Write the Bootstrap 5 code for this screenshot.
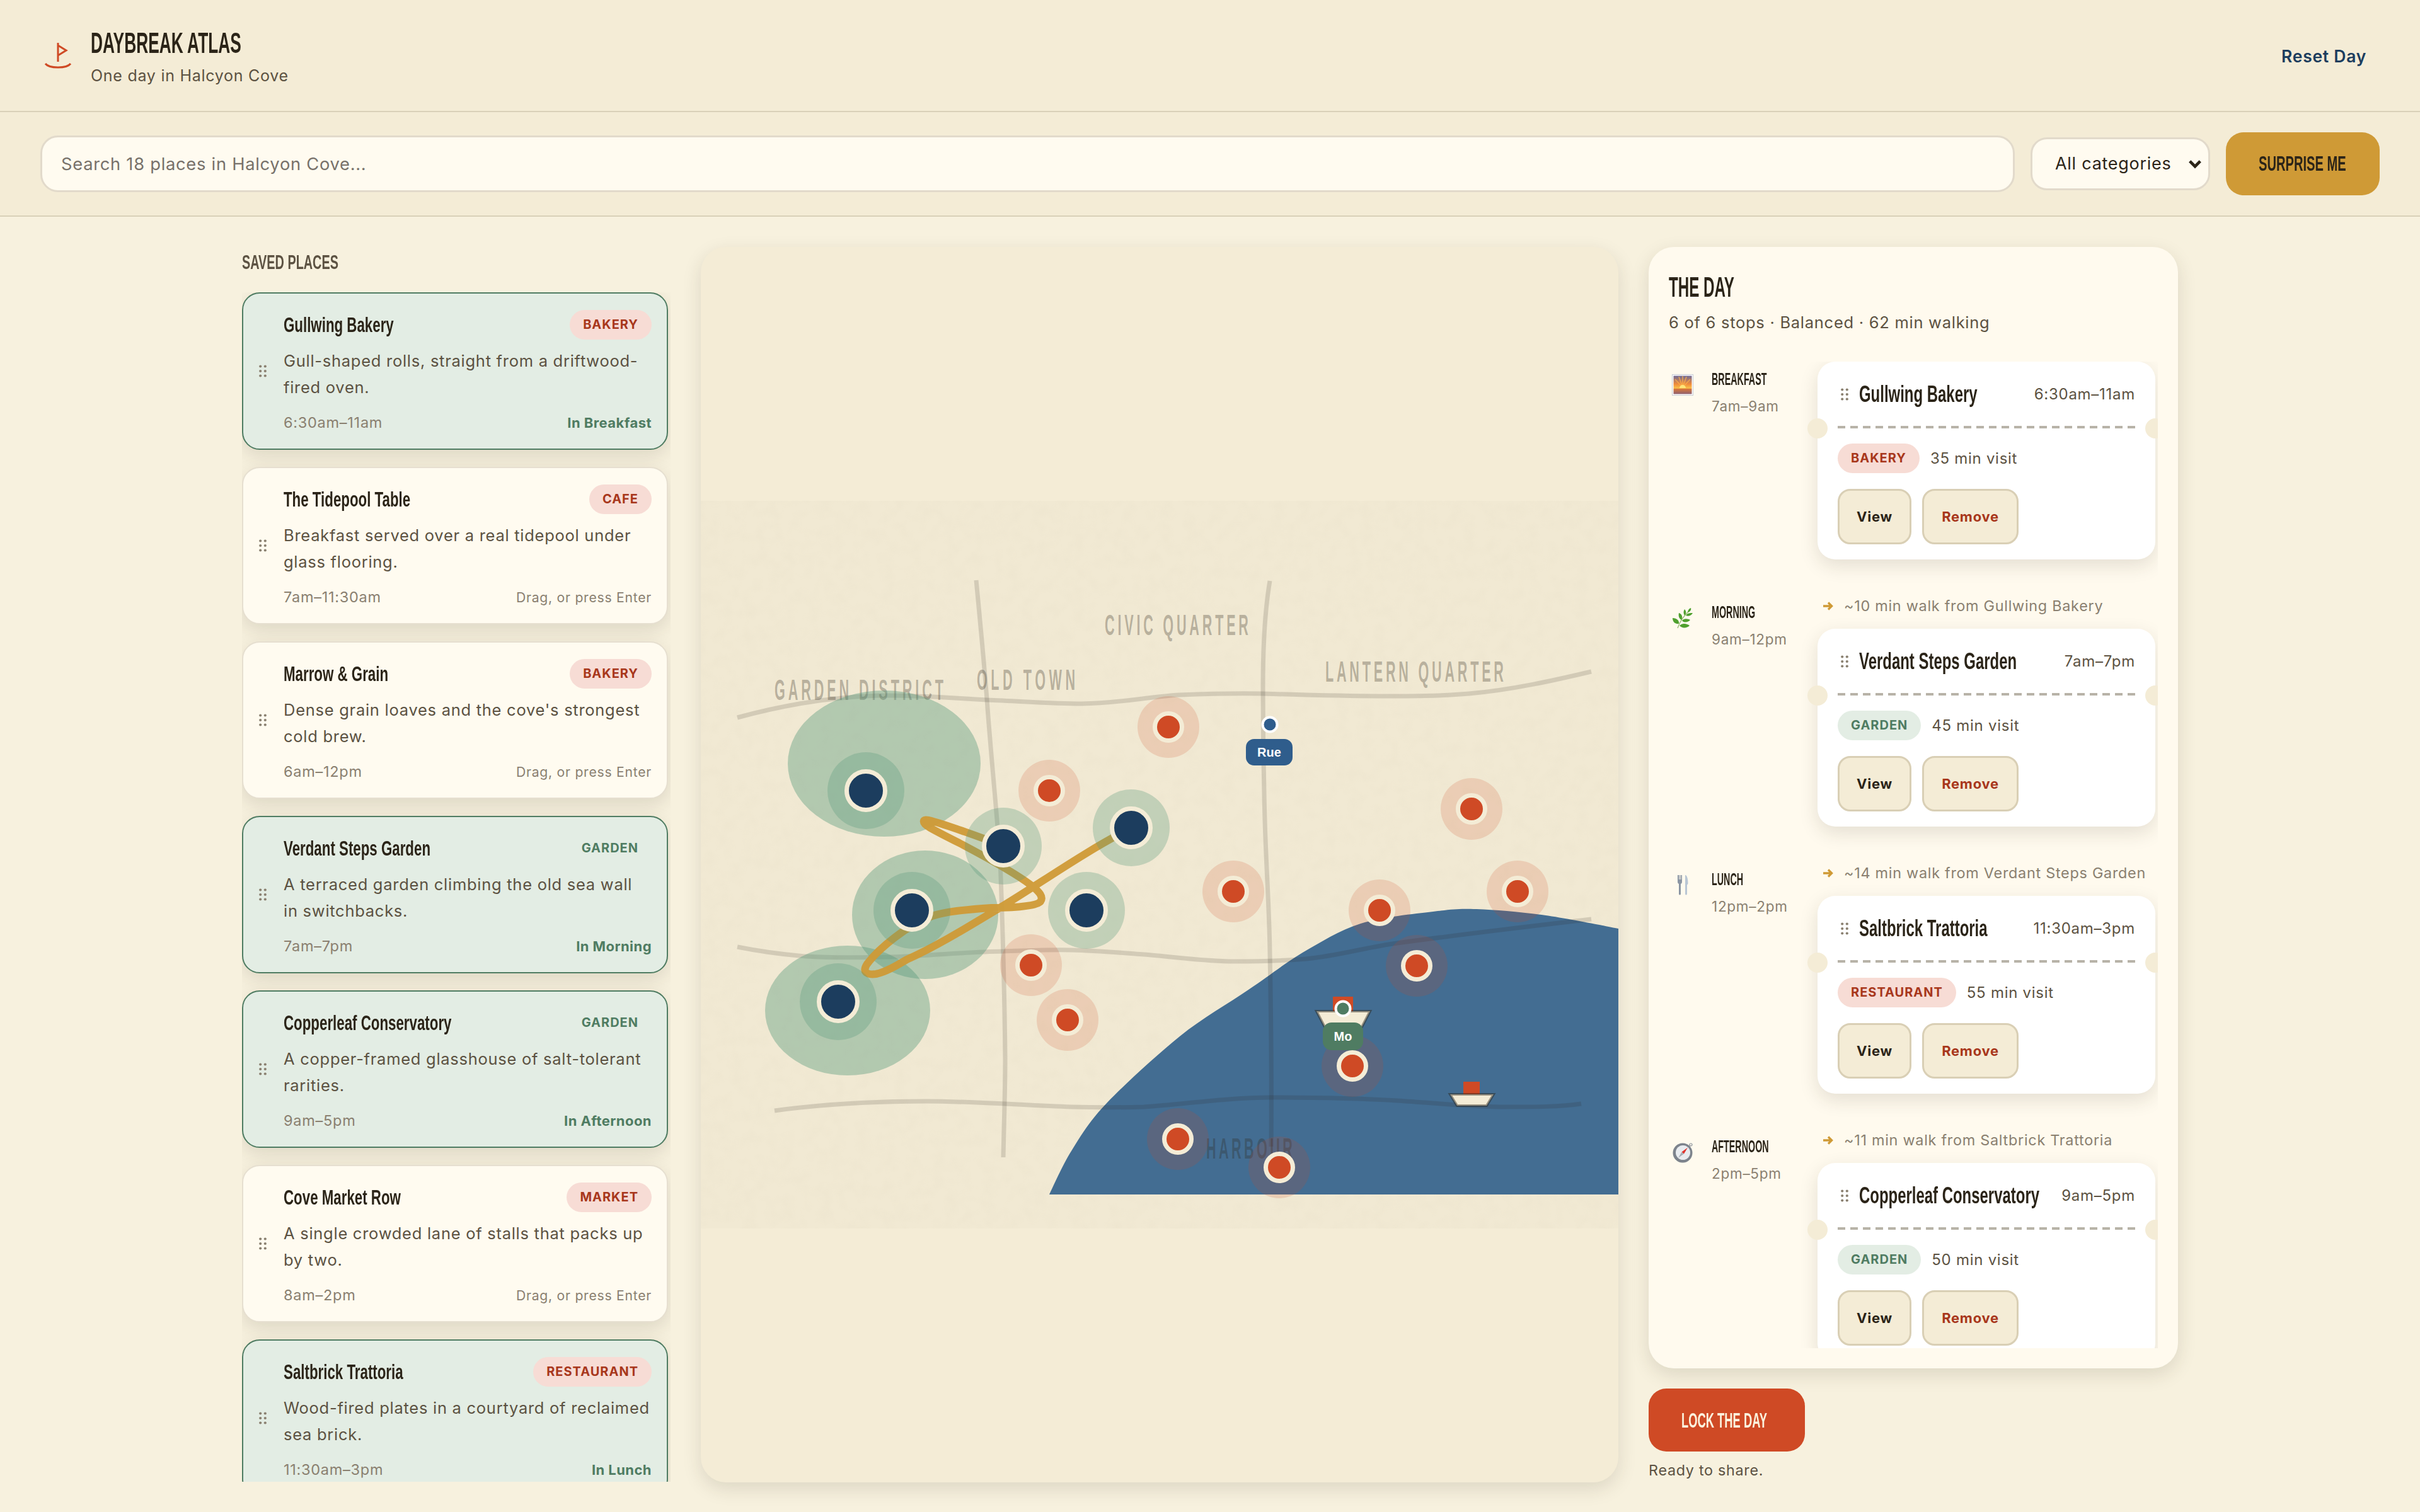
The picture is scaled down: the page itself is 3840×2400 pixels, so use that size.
<!DOCTYPE html>
<html lang="en">
<head>
    <meta charset="UTF-8">
    <meta name="viewport" content="width=device-width, initial-scale=1.0">
    <title>Daybreak Atlas</title>
    <link rel="stylesheet" href="https://cdn.jsdelivr.net/npm/bootstrap@5.3.0/dist/css/bootstrap.min.css">
    <style>
        body {
            background: #f7f1de;
            color: #2b2418;
            font-family: "Inter", "Liberation Sans", sans-serif;
            font-size: 26px;
            letter-spacing: .028em;
            height: 2400px;
            overflow: hidden;
        }
        input, select, button { letter-spacing: inherit; }
        .disp {
            display: inline-block;
            font-family: "Liberation Sans Narrow", "Liberation Sans", sans-serif;
            font-weight: 700;
            letter-spacing: 0;
            white-space: nowrap;
            transform-origin: left center;
        }
        .top-bar {
            background: #f4ecd6;
            border-bottom: 2px solid #d9d0b8;
            height: 178px;
            padding: 0 64px;
        }
        .brand-mark { width: 56px; height: 56px; margin-right: 24px; }
        .brand-name { font-size: 47px; line-height: 56px; display: block; transform: scaleX(.56); margin-top: 2px; }
        .brand-sub { font-size: 25px; line-height: 36px; color: #5c5242; margin-top: 6px; }
        .reset-link { font-size: 26.5px; font-weight: 600; color: #1c3d5e; padding: 4px 21px 0; border: 0; background: none; }
        .tool-bar {
            background: #f4ecd6;
            border-bottom: 2px solid #d9d0b8;
            height: 166px;
            padding: 0 64px;
            gap: 25px;
        }
        .search-box.form-control {
            height: 90px;
            border: 3px solid #e2dacb;
            border-radius: 28px;
            background: #fffbf0;
            font-size: 27.3px;
            padding: 0 30px;
            flex: 1;
        }
        .search-box::placeholder { color: #77716a; }
        .cat-pick.form-select {
            width: 285px;
            height: 84px;
            flex: none;
            border: 3px solid #e2dacb;
            border-radius: 26px;
            background-color: #fffbf0;
            color: #2b2418;
            font-size: 27px;
            padding: 0 0 0 36px;
            background-position: right 10px center;
            background-size: 22px 22px;
            --bs-form-select-bg-img: url("data:image/svg+xml,%3csvg xmlns='http://www.w3.org/2000/svg' viewBox='0 0 16 16'%3e%3cpath fill='none' stroke='%232b2418' stroke-width='3.4' d='M2 5l6 6 6-6'/%3e%3c/svg%3e");
        }
        .gold-btn.btn {
            width: 244px;
            height: 100px;
            border-radius: 28px;
            background: #cf9a36;
            border: 0;
            color: #2b2418;
            padding: 0 0 0 52px;
            text-align: left;
        }
        .gold-btn .disp { font-size: 33px; transform: scaleX(.61); }
        .plan-grid {
            display: grid;
            grid-template-columns: 680px 1456px 840px;
            gap: 48px;
            width: 3072px;
            margin: 0 auto;
            padding-top: 48px;
            height: 2008px;
        }
        .side-col { min-height: 0; }
        .side-head { font-size: 32px; line-height: 48px; color: #5c5242; height: 48px; margin: 0 0 24px; transform: scaleX(.62); }
        .place-list {
            height: 1888px;
            overflow: hidden;
            padding-right: 4px;
            gap: 27px;
        }
        .place-card.card {
            flex: none;
            height: 250px;
            flex-direction: row;
            align-items: center;
            background: #fffbf0;
            border: 2px solid #e6dfd0;
            border-radius: 28px;
            box-shadow: 0 10px 30px rgba(43, 36, 24, .13);
        }
        .place-card.is-picked { background: #e3ede4; border-color: #4f7c62; }
        .grip-dots { width: 12px; height: 20px; fill: #8a8070; flex: none; }
        .place-card > .grip-dots { margin: 0 27px 0 25px; }
        .place-body { flex: 1; min-width: 0; padding-right: 24px; }
        .place-name { font-size: 34px; line-height: 47px; transform: scaleX(.656); }
        .kind-tag {
            font-family: "Inter", "Liberation Sans", sans-serif;
            font-size: 20px;
            font-weight: 700;
            letter-spacing: .05em;
            line-height: 47px;
            height: 47px;
            padding: 0 21px;
            flex: none;
            background: #f7dcd5;
            color: #a8371c;
        }
        .kind-tag.is-green { background: #e3ede4; color: #4f7c62; }
        .is-picked .kind-tag.is-green { background: transparent; }
        .place-desc { font-size: 25.5px; line-height: 42px; color: #5c5242; margin: 13px 0 20px; height: 84px; }
        .place-meta { font-size: 23.5px; line-height: 30px; color: #8a8070; }
        .in-slot { font-size: 22px; font-weight: 700; color: #4f7c62; letter-spacing: .02em; }
        .drag-hint { font-size: 21.2px; color: #8a8070; }
        .map-card.card {
            background: #f4ecd6;
            border: 0;
            border-radius: 40px;
            box-shadow: 0 10px 30px rgba(43, 36, 24, .13);
            height: 1961px;
            overflow: hidden;
        }
        .map-art { width: 1456px; height: 1155px; display: block; }
        .zone-name {
            font-family: "Liberation Sans Narrow", "Liberation Sans", sans-serif;
            font-size: 46px;
            font-weight: 700;
            letter-spacing: 0;
            fill: #2b2418;
            fill-opacity: .3;
        }
        .pin-tag { font-family: "Liberation Sans", sans-serif; font-size: 20px; font-weight: 700; fill: #fff; letter-spacing: 0; }
        .day-col { height: 1960px; }
        .day-panel {
            flex: 1;
            min-height: 0;
            background: #fffaee;
            border-radius: 40px;
            padding: 38px 32px 32px;
            box-shadow: 0 10px 30px rgba(43, 36, 24, .13);
        }
        .day-title { font-size: 44px; line-height: 52px; height: 52px; margin: 0; align-self: flex-start; transform: scaleX(.55); }
        .day-sub { font-size: 25.5px; line-height: 36px; color: #5c5242; margin: 12px 0 0; height: 80px; flex: none; }
        .day-scroll { flex: 1; min-height: 0; overflow: hidden; padding-right: 4px; }
        .day-row { display: flex; flex: none; margin-bottom: 56px; }
        .slot-icon { width: 68px; flex: none; padding: 20px 0 0 5px; }
        .slot-icon svg { width: 34px; height: 34px; display: block; }
        .slot-info { width: 168px; flex: none; padding-top: 12px; }
        .slot-name { font-size: 27px; line-height: 32px; display: block; transform: scaleX(.53); }
        .slot-time { font-size: 22.5px; line-height: 30px; color: #8a8070; margin-top: 12px; }
        .slot-main { width: 536px; flex: none; }
        .walk-note { height: 36px; margin-bottom: 18px; padding-left: 8px; gap: 17px; font-size: 23.4px; color: #8a8070; white-space: nowrap; }
        .walk-note svg { width: 17px; height: 16px; flex: none; }
        .stop-card.card {
            border: 0;
            border-radius: 28px;
            background: #fff;
            padding: 24px 32px;
            height: 314px;
            box-shadow: 0 10px 30px rgba(43, 36, 24, .13);
        }
        .stop-head { height: 56px; }
        .stop-head .grip-dots { margin: 0 17px 0 5px; }
        .stop-title-wrap { flex: 1 1 0; min-width: 0; }
        .stop-name { font-size: 36px; line-height: 56px; transform: scaleX(.665); }
        .stop-hours { font-size: 24px; color: #5c5242; white-space: nowrap; flex: none; }
        .tear-line {
            height: 4px;
            margin: 22px 0 24px;
            background: repeating-linear-gradient(90deg, #b8b3a8 0 12px, transparent 12px 20px);
        }
        .tear-hole {
            position: absolute;
            width: 32px;
            height: 32px;
            top: 90px;
            border-radius: 50%;
            background: #f4ecd6;
        }
        .tear-hole.at-left { left: -16px; }
        .tear-hole.at-right { right: -16px; }
        .visit-len { font-size: 24px; color: #5c5242; margin-left: 17px; }
        .stop-btns { gap: 17px; margin-top: 25px; }
        .stop-btn.btn {
            height: 88px;
            border: 3px solid #d9cfb5;
            border-radius: 20px;
            background: #f4ecd6;
            font-size: 22px;
            font-weight: 700;
            color: #2b2418;
            padding: 0;
        }
        .stop-btn.view-btn { width: 117px; }
        .stop-btn.drop-btn { width: 153px; color: #a8371c; }
        .lock-btn.btn {
            width: 248px;
            height: 100px;
            border: 0;
            border-radius: 28px;
            background: #cf4a25;
            color: #fbf3de;
            margin-top: 32px;
            padding: 0 0 0 52px;
            text-align: left;
        }
        .lock-btn .disp { font-size: 34px; transform: scaleX(.54); }
        .ready-note { font-size: 23.3px; line-height: 36px; color: #5c5242; margin: 12px 0 0; }
    </style>
</head>
<body>
    <svg width="0" height="0" class="position-absolute">
        <defs>
            <g id="grip">
                <circle cx="2.2" cy="2.5" r="2.1"/><circle cx="9.8" cy="2.5" r="2.1"/>
                <circle cx="2.2" cy="10" r="2.1"/><circle cx="9.8" cy="10" r="2.1"/>
                <circle cx="2.2" cy="17.5" r="2.1"/><circle cx="9.8" cy="17.5" r="2.1"/>
            </g>
            <g id="walk-arrow">
                <path d="M1 8h13M9 2.5L14.5 8 9 13.5" fill="none" stroke="#cf9a36" stroke-width="3.4"/>
            </g>
        </defs>
    </svg>

    <header class="navbar top-bar">
        <div class="d-flex align-items-center">
            <svg class="brand-mark" viewBox="64 58 56 56" fill="none" stroke="#cf4a25" stroke-width="3">
                <path d="M92 66v30M92 70l13 8-13 8"/>
                <path d="M72 99c6 8 34 8 40 0"/>
            </svg>
            <div>
                <span class="disp brand-name">DAYBREAK ATLAS</span>
                <div class="brand-sub">One day in Halcyon Cove</div>
            </div>
        </div>
        <button class="reset-link" type="button">Reset Day</button>
    </header>

    <div class="tool-bar d-flex align-items-center">
        <input class="form-control search-box" type="text" placeholder="Search 18 places in Halcyon Cove...">
        <select class="form-select cat-pick"><option>All categories</option></select>
        <button class="btn gold-btn" type="button"><span class="disp">SURPRISE ME</span></button>
    </div>

    <main class="plan-grid">
        <section class="side-col">
            <h2 class="disp side-head">SAVED PLACES</h2>
            <div class="place-list d-flex flex-column">

                <article class="card place-card is-picked">
                    <svg class="grip-dots"><use href="#grip"/></svg>
                    <div class="place-body">
                        <div class="d-flex justify-content-between"><span class="disp place-name">Gullwing Bakery</span><span class="badge rounded-pill kind-tag">BAKERY</span></div>
                        <p class="place-desc">Gull-shaped rolls, straight from a driftwood-fired oven.</p>
                        <div class="d-flex justify-content-between align-items-center place-meta"><span>6:30am–11am</span><span class="in-slot">In Breakfast</span></div>
                    </div>
                </article>

                <article class="card place-card">
                    <svg class="grip-dots"><use href="#grip"/></svg>
                    <div class="place-body">
                        <div class="d-flex justify-content-between"><span class="disp place-name">The Tidepool Table</span><span class="badge rounded-pill kind-tag">CAFE</span></div>
                        <p class="place-desc">Breakfast served over a real tidepool under glass flooring.</p>
                        <div class="d-flex justify-content-between align-items-center place-meta"><span>7am–11:30am</span><span class="drag-hint">Drag, or press Enter</span></div>
                    </div>
                </article>

                <article class="card place-card">
                    <svg class="grip-dots"><use href="#grip"/></svg>
                    <div class="place-body">
                        <div class="d-flex justify-content-between"><span class="disp place-name">Marrow &amp; Grain</span><span class="badge rounded-pill kind-tag">BAKERY</span></div>
                        <p class="place-desc">Dense grain loaves and the cove's strongest cold brew.</p>
                        <div class="d-flex justify-content-between align-items-center place-meta"><span>6am–12pm</span><span class="drag-hint">Drag, or press Enter</span></div>
                    </div>
                </article>

                <article class="card place-card is-picked">
                    <svg class="grip-dots"><use href="#grip"/></svg>
                    <div class="place-body">
                        <div class="d-flex justify-content-between"><span class="disp place-name">Verdant Steps Garden</span><span class="badge rounded-pill kind-tag is-green">GARDEN</span></div>
                        <p class="place-desc">A terraced garden climbing the old sea wall<br>in switchbacks.</p>
                        <div class="d-flex justify-content-between align-items-center place-meta"><span>7am–7pm</span><span class="in-slot">In Morning</span></div>
                    </div>
                </article>

                <article class="card place-card is-picked">
                    <svg class="grip-dots"><use href="#grip"/></svg>
                    <div class="place-body">
                        <div class="d-flex justify-content-between"><span class="disp place-name">Copperleaf Conservatory</span><span class="badge rounded-pill kind-tag is-green">GARDEN</span></div>
                        <p class="place-desc">A copper-framed glasshouse of salt-tolerant rarities.</p>
                        <div class="d-flex justify-content-between align-items-center place-meta"><span>9am–5pm</span><span class="in-slot">In Afternoon</span></div>
                    </div>
                </article>

                <article class="card place-card">
                    <svg class="grip-dots"><use href="#grip"/></svg>
                    <div class="place-body">
                        <div class="d-flex justify-content-between"><span class="disp place-name">Cove Market Row</span><span class="badge rounded-pill kind-tag">MARKET</span></div>
                        <p class="place-desc">A single crowded lane of stalls that packs up by two.</p>
                        <div class="d-flex justify-content-between align-items-center place-meta"><span>8am–2pm</span><span class="drag-hint">Drag, or press Enter</span></div>
                    </div>
                </article>

                <article class="card place-card is-picked">
                    <svg class="grip-dots"><use href="#grip"/></svg>
                    <div class="place-body">
                        <div class="d-flex justify-content-between"><span class="disp place-name">Saltbrick Trattoria</span><span class="badge rounded-pill kind-tag">RESTAURANT</span></div>
                        <p class="place-desc">Wood-fired plates in a courtyard of reclaimed sea brick.</p>
                        <div class="d-flex justify-content-between align-items-center place-meta"><span>11:30am–3pm</span><span class="in-slot">In Lunch</span></div>
                    </div>
                </article>
            </div>
        </section>

        <section class="card map-card d-flex align-items-center justify-content-center">
            <svg class="map-art" viewBox="1112 795 1456 1155">
                <defs>
                    <filter id="paper" x="0" y="0" width="100%" height="100%">
                        <feTurbulence type="fractalNoise" baseFrequency=".05" numOctaves="2" seed="7"/>
                        <feColorMatrix values="0 0 0 0 .55  0 0 0 0 .48  0 0 0 0 .35  0 0 0 .55 -.2"/>
                    </filter>
                    <g id="pin-stop">
                        <circle r="49" fill="#cf4a25" fill-opacity=".17"/>
                        <circle r="21.5" fill="#cf4a25" stroke="#f4ecd6" stroke-width="7"/>
                    </g>
                    <g id="pin-pick">
                        <circle r="61" fill="#56997b" fill-opacity=".3"/>
                        <circle r="30.5" fill="#1c3d5e" stroke="#f4ecd6" stroke-width="7"/>
                    </g>
                </defs>
                <rect x="1112" y="795" width="1456" height="1155" fill="#f1e9d3"/>
                <rect x="1112" y="795" width="1456" height="1155" filter="url(#paper)" opacity=".16"/>

                <path fill="#436d92" d="M1665 1896C1671 1884 1685 1851 1700 1827 1715 1803 1728 1780 1757 1750 1786 1720 1835 1675 1872 1645 1909 1615 1949 1593 1981 1571 2014 1549 2037 1530 2067 1512 2097 1495 2124 1477 2159 1466 2194 1455 2243 1451 2274 1447 2305 1443 2314 1442 2343 1443 2372 1444 2408 1447 2446 1452 2483 1457 2548 1470 2568 1474V1896Z"/>

                <g fill="none" stroke="#2b2418" stroke-opacity=".15" stroke-width="7">
                    <path d="M1170 1139C1240 1120 1320 1106 1395 1104 1460 1103 1510 1108 1566 1111 1620 1113 1670 1117 1716 1117 1780 1116 1820 1106 1872 1103 1920 1101 1960 1100 2004 1101 2070 1103 2130 1105 2188 1105 2240 1105 2285 1105 2331 1101 2400 1095 2470 1079 2525 1066"/>
                    <path d="M1170 1503C1205 1510 1240 1515 1279 1518 1325 1521 1370 1520 1412 1519 1475 1517 1535 1511 1591 1510 1630 1509 1665 1507 1700 1508 1740 1509 1775 1512 1815 1515 1865 1519 1910 1526 1958 1526 2000 1526 2035 1525 2073 1522 2125 1517 2170 1503 2217 1497 2320 1483 2430 1470 2525 1459"/>
                    <path d="M1229 1763C1310 1752 1390 1748 1469 1748 1550 1748 1630 1755 1700 1757 1740 1758 1775 1758 1815 1757 1885 1752 1950 1742 2016 1742 2085 1742 2150 1743 2217 1747 2280 1751 2335 1757 2389 1757 2435 1757 2475 1757 2509 1752"/>
                    <path d="M1549 921C1555 985 1561 1045 1566 1110 1572 1195 1581 1280 1587 1365 1591 1470 1594 1575 1595 1680 1595 1735 1593 1785 1592 1837"/>
                    <path d="M2015 922C2006 975 2004 1035 2004 1090 2004 1160 2005 1230 2007 1301 2009 1375 2014 1440 2015 1512 2017 1620 2018 1720 2017 1820"/>
                </g>

                <g class="zone-name">
                    <text transform="translate(1229 1111) scale(.47 1)" textLength="570">GARDEN DISTRICT</text>
                    <text transform="translate(1550 1095) scale(.47 1)" textLength="332">OLD TOWN</text>
                    <text transform="translate(1753 1008) scale(.47 1)" textLength="485">CIVIC QUARTER</text>
                    <text transform="translate(2103 1082) scale(.47 1)" textLength="602">LANTERN QUARTER</text>
                    <text transform="translate(1914 1839) scale(.47 1)" textLength="291">HARBOUR</text>
                </g>

                <g fill="#56997b" fill-opacity=".4">
                    <ellipse cx="1403" cy="1212" rx="153" ry="116"/>
                    <ellipse cx="1468" cy="1452" rx="116" ry="102"/>
                    <ellipse cx="1345" cy="1604" rx="131" ry="103"/>
                </g>

                <path fill="none" stroke="#cf9a36" stroke-opacity=".95" stroke-width="12" stroke-linecap="round" stroke-linejoin="round" d="M1592 1343C1560 1330 1500 1309 1478 1303 1462 1298 1462 1306 1476 1314 1490 1322 1510 1332 1524 1339 1560 1358 1610 1385 1636 1405 1650 1416 1656 1424 1651 1431 1646 1437 1620 1441 1573 1441 1530 1444 1500 1447 1479 1454 1440 1468 1395 1505 1376 1530 1368 1542 1374 1548 1390 1546 1405 1543 1422 1533 1439 1523 1480 1505 1530 1475 1573 1449 1640 1410 1710 1358 1795 1314"/>

                <use href="#pin-pick" x="1374" y="1255"/>
                <use href="#pin-pick" x="1592" y="1343"/>
                <use href="#pin-pick" x="1795" y="1314"/>
                <use href="#pin-pick" x="1447" y="1445"/>
                <use href="#pin-pick" x="1724" y="1445"/>
                <use href="#pin-pick" x="1330" y="1590"/>

                <use href="#pin-stop" x="1665" y="1255"/>
                <use href="#pin-stop" x="1636" y="1532"/>
                <use href="#pin-stop" x="1694" y="1619"/>
                <use href="#pin-stop" x="1854" y="1154"/>
                <use href="#pin-stop" x="1957" y="1415"/>
                <use href="#pin-stop" x="2335" y="1284"/>
                <use href="#pin-stop" x="2408" y="1415"/>
                <use href="#pin-stop" x="2189" y="1445"/>
                <use href="#pin-stop" x="2248" y="1533"/>
                <use href="#pin-stop" x="2146" y="1692"/>
                <use href="#pin-stop" x="1869" y="1808"/>
                <use href="#pin-stop" x="2030" y="1853"/>

                <rect x="2322" y="1717" width="26" height="20" fill="#cf4a25"/>
                <path d="M2301 1737H2370L2359 1755H2312Z" fill="#f4ecd6" stroke="#2b2418" stroke-opacity=".45" stroke-width="4"/>
                <rect x="2115" y="1582" width="32" height="24" fill="#cf4a25"/>
                <path d="M2089 1605H2174L2160 1632H2103Z" fill="#f4ecd6" stroke="#2b2418" stroke-opacity=".45" stroke-width="4"/>

                <circle cx="2015" cy="1150" r="11.5" fill="#2f5d8c" stroke="#fff" stroke-width="4"/>
                <rect x="1977" y="1173" width="74" height="42" rx="13" fill="#2f5d8c"/>
                <text class="pin-tag" x="2014" y="1201" text-anchor="middle">Rue</text>
                <circle cx="2131" cy="1601" r="11.5" fill="#4f7c62" stroke="#fff" stroke-width="4"/>
                <rect x="2099" y="1623" width="64" height="44" rx="14" fill="#4f7c62"/>
                <text class="pin-tag" x="2131" y="1652" text-anchor="middle">Mo</text>
            </svg>
        </section>

        <section class="day-col d-flex flex-column">
            <div class="day-panel d-flex flex-column">
                <h2 class="disp day-title">THE DAY</h2>
                <p class="day-sub">6 of 6 stops · Balanced · 62 min walking</p>
                <div class="day-scroll d-flex flex-column">

                    <div class="day-row">
                        <div class="slot-icon">
                            <svg viewBox="0 0 34 34">
                                <defs>
                                    <linearGradient id="dawn" x1="0" y1="0" x2="0" y2="1">
                                        <stop offset="0" stop-color="#6f6a96"/><stop offset=".45" stop-color="#f08a3a"/><stop offset=".68" stop-color="#f9c04a"/><stop offset=".72" stop-color="#d8763a"/><stop offset="1" stop-color="#8d6070"/>
                                    </linearGradient>
                                </defs>
                                <rect x=".5" y=".5" width="33" height="33" fill="#fff" stroke="#c9ccd4"/>
                                <rect x="2.5" y="2.5" width="29" height="29" fill="url(#dawn)"/>
                                <path d="M17 21L5 8M17 21L11 4M17 21V3M17 21L23 4M17 21L29 8" stroke="#fbb24a" stroke-width="1.6" opacity=".75"/>
                                <path d="M12 22a5 5 0 0 1 10 0Z" fill="#ffe57a"/>
                            </svg>
                        </div>
                        <div class="slot-info">
                            <span class="disp slot-name">BREAKFAST</span>
                            <div class="slot-time">7am–9am</div>
                        </div>
                        <div class="slot-main">
                            <div class="card stop-card">
                                <span class="tear-hole at-left"></span><span class="tear-hole at-right"></span>
                                <div class="d-flex align-items-center stop-head">
                                    <svg class="grip-dots"><use href="#grip"/></svg>
                                    <div class="stop-title-wrap"><span class="disp stop-name">Gullwing Bakery</span></div>
                                    <span class="stop-hours">6:30am–11am</span>
                                </div>
                                <div class="tear-line"></div>
                                <div class="d-flex align-items-center">
                                    <span class="badge rounded-pill kind-tag">BAKERY</span><span class="visit-len">35 min visit</span>
                                </div>
                                <div class="d-flex stop-btns">
                                    <button class="btn stop-btn view-btn" type="button">View</button>
                                    <button class="btn stop-btn drop-btn" type="button">Remove</button>
                                </div>
                            </div>
                        </div>
                    </div>

                    <div class="day-row">
                        <div class="slot-icon">
                            <svg viewBox="0 0 34 34">
                                <path d="M9 33C12 24 18 14 28 5" fill="none" stroke="#8fb56a" stroke-width="1.2"/>
                                <g fill="#4fa02e">
                                    <path d="M11 26C4 27 1 22 1 17 6 17 12 20 11 26Z"/>
                                    <path d="M12 29C17 24 24 26 28 29 24 33 16 34 12 29Z"/>
                                    <path d="M15 20C11 18 10 13 11 9 15 10 18 15 15 20Z"/>
                                    <path d="M16 21C19 17 25 18 29 20 26 24 19 25 16 21Z"/>
                                    <path d="M20 13C18 10 18 6 20 3 23 6 23 10 20 13Z"/>
                                    <path d="M22 13C24 9 29 9 33 9 31 13 26 15 22 13Z"/>
                                    <path d="M25 8C25 5 27 2 30 1 31 4 29 7 25 8Z"/>
                                </g>
                            </svg>
                        </div>
                        <div class="slot-info">
                            <span class="disp slot-name">MORNING</span>
                            <div class="slot-time">9am–12pm</div>
                        </div>
                        <div class="slot-main">
                            <div class="d-flex align-items-center walk-note"><svg viewBox="0 0 17 16"><use href="#walk-arrow"/></svg><span>~10 min walk from Gullwing Bakery</span></div>
                            <div class="card stop-card">
                                <span class="tear-hole at-left"></span><span class="tear-hole at-right"></span>
                                <div class="d-flex align-items-center stop-head">
                                    <svg class="grip-dots"><use href="#grip"/></svg>
                                    <div class="stop-title-wrap"><span class="disp stop-name">Verdant Steps Garden</span></div>
                                    <span class="stop-hours">7am–7pm</span>
                                </div>
                                <div class="tear-line"></div>
                                <div class="d-flex align-items-center">
                                    <span class="badge rounded-pill kind-tag is-green">GARDEN</span><span class="visit-len">45 min visit</span>
                                </div>
                                <div class="d-flex stop-btns">
                                    <button class="btn stop-btn view-btn" type="button">View</button>
                                    <button class="btn stop-btn drop-btn" type="button">Remove</button>
                                </div>
                            </div>
                        </div>
                    </div>

                    <div class="day-row">
                        <div class="slot-icon">
                            <svg viewBox="0 0 34 34">
                                <path d="M10 1h1.2v7h1V1h1.2v7h1V1H16v11c0 2-1.5 3-2 3v16a1.500 1.500 0 0 1-3 0V15c-.5 0-2-1-2-3V1Z" fill="#8b95a3"/>
                                <path d="M21 1c3 0 4.500 6 4.500 13 0 1.500-1 2.500-1.500 2.500V31a1.500 1.500 0 0 1-3 0Z" fill="#b9c6d4"/>
                            </svg>
                        </div>
                        <div class="slot-info">
                            <span class="disp slot-name">LUNCH</span>
                            <div class="slot-time">12pm–2pm</div>
                        </div>
                        <div class="slot-main">
                            <div class="d-flex align-items-center walk-note"><svg viewBox="0 0 17 16"><use href="#walk-arrow"/></svg><span>~14 min walk from Verdant Steps Garden</span></div>
                            <div class="card stop-card">
                                <span class="tear-hole at-left"></span><span class="tear-hole at-right"></span>
                                <div class="d-flex align-items-center stop-head">
                                    <svg class="grip-dots"><use href="#grip"/></svg>
                                    <div class="stop-title-wrap"><span class="disp stop-name">Saltbrick Trattoria</span></div>
                                    <span class="stop-hours">11:30am–3pm</span>
                                </div>
                                <div class="tear-line"></div>
                                <div class="d-flex align-items-center">
                                    <span class="badge rounded-pill kind-tag">RESTAURANT</span><span class="visit-len">55 min visit</span>
                                </div>
                                <div class="d-flex stop-btns">
                                    <button class="btn stop-btn view-btn" type="button">View</button>
                                    <button class="btn stop-btn drop-btn" type="button">Remove</button>
                                </div>
                            </div>
                        </div>
                    </div>

                    <div class="day-row">
                        <div class="slot-icon">
                            <svg viewBox="0 0 34 34">
                                <circle cx="30" cy="5" r="2" fill="none" stroke="#8a9098" stroke-width="1.2"/>
                                <circle cx="17" cy="18" r="15.500" fill="#7d838c"/>
                                <circle cx="17.500" cy="17.500" r="11.500" fill="#e9ecf0"/>
                                <path d="M25 9.500L19 19.500 15.500 16.500Z" fill="#e0322c"/>
                                <path d="M10 26L15.500 16.500 19 19.500Z" fill="#a8adb5"/>
                            </svg>
                        </div>
                        <div class="slot-info">
                            <span class="disp slot-name">AFTERNOON</span>
                            <div class="slot-time">2pm–5pm</div>
                        </div>
                        <div class="slot-main">
                            <div class="d-flex align-items-center walk-note"><svg viewBox="0 0 17 16"><use href="#walk-arrow"/></svg><span>~11 min walk from Saltbrick Trattoria</span></div>
                            <div class="card stop-card">
                                <span class="tear-hole at-left"></span><span class="tear-hole at-right"></span>
                                <div class="d-flex align-items-center stop-head">
                                    <svg class="grip-dots"><use href="#grip"/></svg>
                                    <div class="stop-title-wrap"><span class="disp stop-name">Copperleaf Conservatory</span></div>
                                    <span class="stop-hours">9am–5pm</span>
                                </div>
                                <div class="tear-line"></div>
                                <div class="d-flex align-items-center">
                                    <span class="badge rounded-pill kind-tag is-green">GARDEN</span><span class="visit-len">50 min visit</span>
                                </div>
                                <div class="d-flex stop-btns">
                                    <button class="btn stop-btn view-btn" type="button">View</button>
                                    <button class="btn stop-btn drop-btn" type="button">Remove</button>
                                </div>
                            </div>
                        </div>
                    </div>

                </div>
            </div>
            <button class="btn lock-btn" type="button"><span class="disp">LOCK THE DAY</span></button>
            <p class="ready-note">Ready to share.</p>
        </section>
    </main>
    <script src="https://cdn.jsdelivr.net/npm/bootstrap@5.3.0/dist/js/bootstrap.bundle.min.js"></script>
</body>
</html>
